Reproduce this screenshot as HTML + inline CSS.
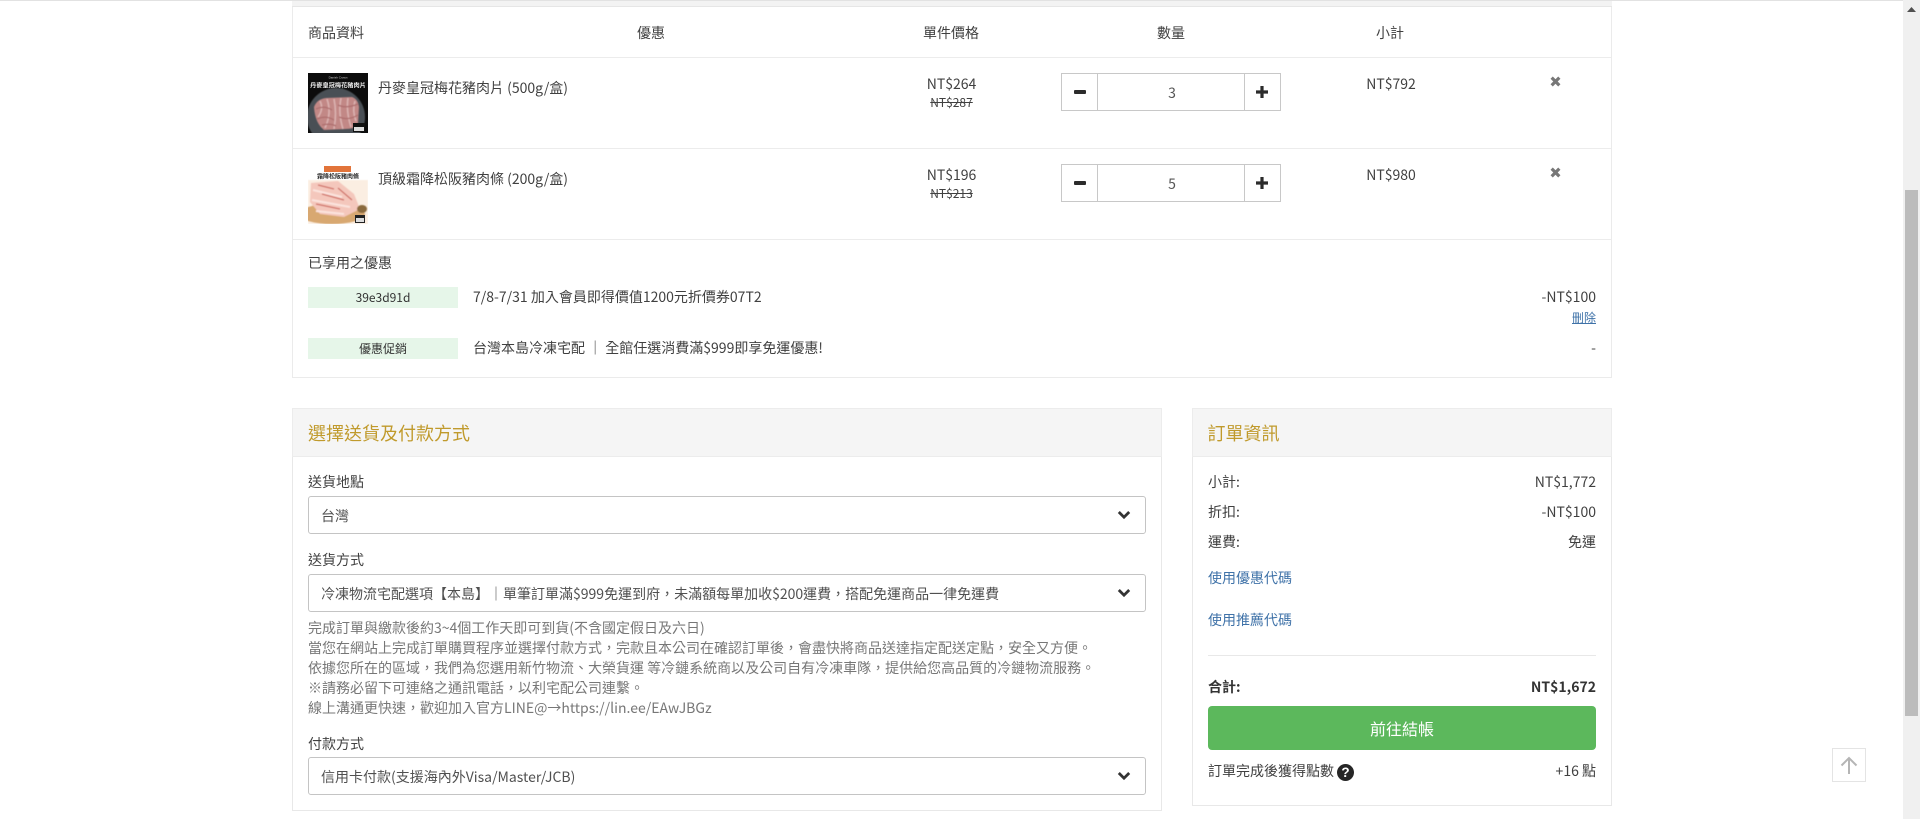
<!DOCTYPE html>
<html lang="zh-Hant">
<head>
<meta charset="utf-8">
<title>購物車</title>
<style>
html,body{margin:0;padding:0;width:1920px;height:819px;overflow:hidden;background:#fff}
body{position:relative;font-family:"Noto Sans CJK TC","Noto Sans CJK JP","Liberation Sans",sans-serif;font-size:14px;color:#404040}
.a{position:absolute;box-sizing:border-box}
.t{position:absolute;white-space:nowrap;line-height:20px;height:20px}
.c{transform:translateX(-50%)}
.r{text-align:right}
.b{border:1px solid #e8e8e8}
.h{background:#f5f5f5;border-bottom:1px solid #e8e8e8}
.gold{color:#c09a2c;font-size:18px}
.sel{position:absolute;left:308px;width:838px;height:38px;border:1px solid #c4c4c4;border-radius:3px;box-sizing:border-box;background:#fff}
.sel span{position:absolute;left:12px;top:9px;line-height:20px;color:#505050;white-space:nowrap}
.sel svg{position:absolute;left:808px;top:13px}
.link{color:#3f72a8}
.q{position:absolute;box-sizing:border-box;border:1px solid #c8c8c8;background:#fff}
</style>
</head>
<body>
<div class="a" style="left:0;top:0;width:1920px;height:1px;background:#e2e2e2"></div>

<!-- cart card -->
<div class="a" style="left:292px;top:1px;width:1320px;height:377px;border:1px solid #ebebeb;border-top:0"></div>
<div class="a" style="left:292px;top:1px;width:1320px;height:6px;background:#f3f3f3;border-bottom:1px solid #e6e6e6"></div>
<div class="a" style="left:293px;top:57px;width:1318px;height:1px;background:#ececec"></div>
<div class="a" style="left:293px;top:148px;width:1318px;height:1px;background:#ececec"></div>
<div class="a" style="left:293px;top:239px;width:1318px;height:1px;background:#ececec"></div>

<div class="t" style="left:308px;top:23px">商品資料</div>
<div class="t c" style="left:651px;top:23px">優惠</div>
<div class="t c" style="left:951px;top:23px">單件價格</div>
<div class="t c" style="left:1171px;top:23px">數量</div>
<div class="t c" style="left:1390px;top:23px">小計</div>

<!-- product image 1 -->
<svg class="a" style="left:308px;top:73px" width="60" height="60" viewBox="0 0 60 60">
<defs><filter id="f" x="-10%" y="-10%" width="120%" height="120%"><feGaussianBlur stdDeviation="0.6"/></filter></defs>
<rect width="60" height="60" fill="#0c0c0c"/>
<text x="30" y="5.5" font-size="3" fill="#ccc" text-anchor="middle" font-family="Liberation Sans,sans-serif">Danish Crown</text>
<text x="30" y="14.5" font-size="6.2" font-weight="700" fill="#eee" text-anchor="middle" font-family="Noto Sans CJK TC,sans-serif">丹麥皇冠梅花豬肉片</text>
<clipPath id="p1"><rect width="60" height="60"/></clipPath>
<g clip-path="url(#p1)"><circle cx="28" cy="44" r="29" fill="#4a5054" filter="url(#f)"/>
<g filter="url(#f)">
<path d="M6 34Q9 26 18 25L44 24Q50 26 51 34L50 50Q48 56 38 56L16 57Q7 50 6 34Z" fill="#c28886"/>
<path d="M12 28Q16 36 10 44M19 26Q24 40 17 55M26 26Q29 40 26 56M33 25Q30 40 35 56M40 25Q38 38 43 54M47 28Q44 38 48 48" stroke="#dcb4b2" stroke-width="1.5" fill="none"/>
<path d="M8 36Q16 32 24 37M30 32Q38 36 50 31M9 46Q18 42 26 47M31 44Q40 48 50 42M14 52Q22 50 28 53" stroke="#ae6e6e" stroke-width="1.3" fill="none"/>
</g></g>
<rect x="45" y="50" width="12" height="9" fill="#111"/>
<rect x="46" y="54" width="10" height="4" fill="#ddd"/>
</svg>

<!-- product image 2 -->
<svg class="a" style="left:308px;top:164px" width="60" height="60" viewBox="0 0 60 60">
<defs><filter id="g" x="-10%" y="-10%" width="120%" height="120%"><feGaussianBlur stdDeviation="0.6"/></filter></defs>
<rect width="60" height="60" fill="#fff"/>
<rect x="0" y="16" width="60" height="44" fill="#fbeee2" filter="url(#g)"/>
<rect x="16" y="2" width="27" height="6" fill="#e2743a"/>
<text x="30" y="14.5" font-size="6" font-weight="700" fill="#2a2a2a" text-anchor="middle" font-family="Noto Sans CJK TC,sans-serif">霜降松阪豬肉條</text>
<g filter="url(#g)">
<ellipse cx="24" cy="50" rx="33" ry="10" fill="#d8a871"/>
<path d="M3 19L30 17L46 30L52 45L36 53L12 50L2 38Z" fill="#f4c7bc"/>
<path d="M10 21L26 25M14 30L36 36M8 40L32 45M30 24L44 36" stroke="#cf6f66" stroke-width="1.2" fill="none"/>
<path d="M5 26L34 33M4 36L42 43M8 47L36 50" stroke="#fbe4de" stroke-width="2" fill="none"/>
<ellipse cx="54" cy="45" rx="5" ry="4" fill="#8b6a3e"/>
</g>
<rect x="47" y="51" width="10" height="8" fill="#222"/>
<rect x="48" y="54" width="8" height="4" fill="#ddd"/>
</svg>

<div class="t" style="left:378px;top:78px">丹麥皇冠梅花豬肉片 (500g/盒)</div>
<div class="t" style="left:378px;top:169px">頂級霜降松阪豬肉條 (200g/盒)</div>

<div class="t c" style="left:951.5px;top:74px">NT$264</div>
<div class="t c" style="left:951.5px;top:93px;font-size:12px;text-decoration:line-through">NT$287</div>
<div class="t c" style="left:951.5px;top:165px">NT$196</div>
<div class="t c" style="left:951.5px;top:184px;font-size:12px;text-decoration:line-through">NT$213</div>

<!-- qty 1 -->
<div class="q" style="left:1061px;top:73px;width:37px;height:38px"></div>
<div class="q" style="left:1097px;top:73px;width:148px;height:38px"></div>
<div class="q" style="left:1244px;top:73px;width:37px;height:38px"></div>
<div class="a" style="left:1074px;top:90px;width:12px;height:4px;background:#2b2b2b;border-radius:1px"></div>
<svg class="a" style="left:1256px;top:86px" width="12" height="12"><path d="M4.4 0h3.2v4.4H12v3.2H7.6V12H4.4V7.6H0V4.4h4.4z" fill="#2b2b2b"/></svg>
<div class="t c" style="left:1172px;top:83px;color:#555">3</div>

<!-- qty 2 -->
<div class="q" style="left:1061px;top:164px;width:37px;height:38px"></div>
<div class="q" style="left:1097px;top:164px;width:148px;height:38px"></div>
<div class="q" style="left:1244px;top:164px;width:37px;height:38px"></div>
<div class="a" style="left:1074px;top:181px;width:12px;height:4px;background:#2b2b2b;border-radius:1px"></div>
<svg class="a" style="left:1256px;top:177px" width="12" height="12"><path d="M4.4 0h3.2v4.4H12v3.2H7.6V12H4.4V7.6H0V4.4h4.4z" fill="#2b2b2b"/></svg>
<div class="t c" style="left:1172px;top:174px;color:#555">5</div>

<div class="t c" style="left:1391px;top:74px">NT$792</div>
<div class="t c" style="left:1391px;top:165px">NT$980</div>

<svg class="a" style="left:1550px;top:76px" width="11" height="11"><path d="M2.8 1.8L8.2 7.2M8.2 1.8L2.8 7.2" transform="translate(0 1)" stroke="#777" stroke-width="3.2" stroke-linecap="square"/></svg>
<svg class="a" style="left:1550px;top:167px" width="11" height="11"><path d="M2.8 1.8L8.2 7.2M8.2 1.8L2.8 7.2" transform="translate(0 1)" stroke="#777" stroke-width="3.2" stroke-linecap="square"/></svg>

<!-- coupons -->
<div class="t" style="left:308px;top:253px">已享用之優惠</div>
<div class="a" style="left:308px;top:287px;width:150px;height:21px;background:#e6f6e9;text-align:center;font-size:12px;line-height:21px;color:#333">39e3d91d</div>
<div class="t" style="left:473px;top:287px">7/8-7/31 加入會員即得價值1200元折價券07T2</div>
<div class="t r" style="right:324px;top:287px">-NT$100</div>
<div class="t r link" style="right:324px;top:308px;font-size:12px;text-decoration:underline">刪除</div>
<div class="a" style="left:308px;top:338px;width:150px;height:21px;background:#e6f6e9;text-align:center;font-size:12px;line-height:21px;color:#333">優惠促銷</div>
<div class="t" style="left:473px;top:338px">台灣本島冷凍宅配 ｜ 全館任選消費滿$999即享免運優惠!</div>
<div class="t r" style="right:324px;top:338px">-</div>

<!-- left panel -->
<div class="a b" style="left:292px;top:408px;width:870px;height:403px"></div>
<div class="a h" style="left:292px;top:408px;width:870px;height:49px;border:1px solid #ececec"></div>
<div class="t gold" style="left:308px;top:423px">選擇送貨及付款方式</div>

<div class="t" style="left:308px;top:472px">送貨地點</div>
<div class="sel" style="top:496px"><span>台灣</span><svg width="14" height="10"><path d="M1.8 2L7 7.2L12.2 2" stroke="#333" stroke-width="2.8" fill="none"/></svg></div>
<div class="t" style="left:308px;top:550px">送貨方式</div>
<div class="sel" style="top:574px"><span>冷凍物流宅配選項【本島】｜單筆訂單滿$999免運到府，未滿額每單加收$200運費，搭配免運商品一律免運費</span><svg width="14" height="10"><path d="M1.8 2L7 7.2L12.2 2" stroke="#333" stroke-width="2.8" fill="none"/></svg></div>
<div class="t" style="left:308px;top:618px;color:#777">完成訂單與繳款後約3~4個工作天即可到貨(不含國定假日及六日)</div>
<div class="t" style="left:308px;top:638px;color:#777">當您在網站上完成訂單購買程序並選擇付款方式，完款且本公司在確認訂單後，會盡快將商品送達指定配送定點，安全又方便。</div>
<div class="t" style="left:308px;top:658px;color:#777">依據您所在的區域，我們為您選用新竹物流、大榮貨運 等冷鏈系統商以及公司自有冷凍車隊，提供給您高品質的冷鏈物流服務。</div>
<div class="t" style="left:308px;top:678px;color:#777">※請務必留下可連絡之通訊電話，以利宅配公司連繫。</div>
<div class="t" style="left:308px;top:698px;color:#777">線上溝通更快速，歡迎加入官方LINE@→https://lin.ee/EAwJBGz</div>
<div class="t" style="left:308px;top:733.5px">付款方式</div>
<div class="sel" style="top:757px"><span>信用卡付款(支援海內外Visa/Master/JCB)</span><svg width="14" height="10"><path d="M1.8 2L7 7.2L12.2 2" stroke="#333" stroke-width="2.8" fill="none"/></svg></div>

<!-- right panel -->
<div class="a b" style="left:1192px;top:408px;width:420px;height:398px"></div>
<div class="a h" style="left:1192px;top:408px;width:420px;height:49px;border:1px solid #ececec"></div>
<div class="t gold" style="left:1207.5px;top:423px">訂單資訊</div>

<div class="t" style="left:1208px;top:472px">小計:</div>
<div class="t r" style="right:324px;top:472px">NT$1,772</div>
<div class="t" style="left:1208px;top:502px">折扣:</div>
<div class="t r" style="right:324px;top:502px">-NT$100</div>
<div class="t" style="left:1208px;top:532px">運費:</div>
<div class="t r" style="right:324px;top:532px">免運</div>
<div class="t link" style="left:1208px;top:568px">使用優惠代碼</div>
<div class="t link" style="left:1208px;top:610px">使用推薦代碼</div>
<div class="a" style="left:1208px;top:655px;width:388px;height:1px;background:#e8e8e8"></div>
<div class="t" style="left:1208px;top:677px;font-weight:700;color:#333">合計:</div>
<div class="t r" style="right:324px;top:677px;font-weight:700;color:#333">NT$1,672</div>
<div class="a" style="left:1208px;top:706px;width:388px;height:44px;background:#5cb85c;border-radius:4px;color:#fff;font-size:16px;line-height:44px;text-align:center">前往結帳</div>
<div class="t" style="left:1208px;top:761px">訂單完成後獲得點數</div>
<div class="a" style="left:1337px;top:764px;width:17px;height:17px;border-radius:50%;background:#262626;color:#fff;font:700 13.5px/17px 'Liberation Sans',sans-serif;text-align:center">?</div>
<div class="t r" style="right:324px;top:761px">+16 點</div>

<!-- back to top -->
<div class="a" style="left:1832px;top:748px;width:34px;height:34px;border:1px solid #e4e4e4;background:#fff"></div>
<svg class="a" style="left:1840px;top:756px" width="18" height="19"><path d="M9 18V2M1.5 9.5L9 2L16.5 9.5" stroke="#b5b5b5" stroke-width="2" fill="none"/></svg>

<!-- scrollbar -->
<div class="a" style="left:1903px;top:0;width:17px;height:819px;background:#f0f0f0"></div>
<div class="a" style="left:1905px;top:190px;width:13px;height:526px;background:#bcbcbc"></div>
<svg class="a" style="left:1907px;top:7px" width="9" height="6"><path d="M0 5L4.5 0L9 5Z" fill="#505050"/></svg>
</body>
</html>
